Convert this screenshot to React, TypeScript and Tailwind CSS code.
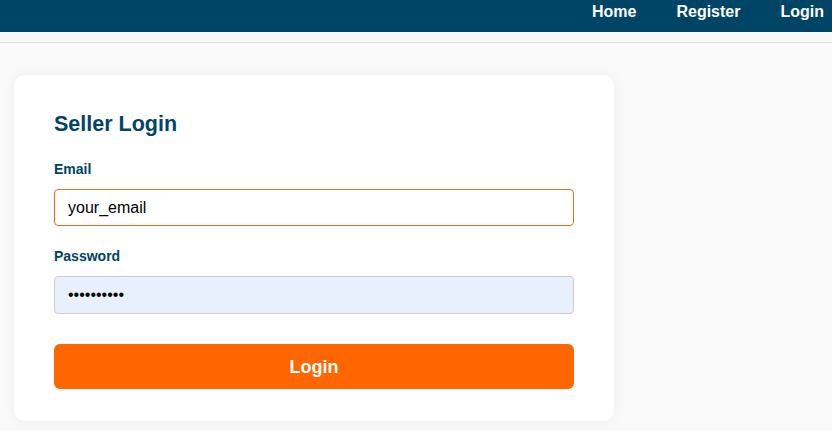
import React from "react";

export default function App() {
  return (
    <div
      className="min-h-screen w-full bg-[#f9f9f9]"
      style={{ fontFamily: '"Liberation Sans", Arial, sans-serif' }}
    >
      <header className="h-8 bg-[#004466] flex justify-end items-start pr-2">
        <nav className="flex gap-10 text-white font-bold text-base leading-6">
          <a href="#" className="text-white">Home</a>
          <a href="#" className="text-white">Register</a>
          <a href="#" className="text-white">Login</a>
        </nav>
      </header>
      <div className="h-[11px] border-b border-[#dddddd]" />
      <main className="pt-8 pl-[14px]">
        <div className="w-[600px] bg-white rounded-[10px] shadow-[0_0_12px_rgba(0,0,0,0.05)] px-10 pt-9 pb-8">
          <h2 className="text-[21.5px] leading-[27px] font-bold text-[#004466] mb-[21px]">Seller Login</h2>
          <label className="block text-sm leading-5 font-bold text-[#004466] mb-[10px]">Email</label>
          <input
            type="text"
            readOnly
            defaultValue="your_email"
            className="block w-full h-[37px] px-[13px] text-base text-black bg-white border border-[#f26a1b] rounded outline-none mb-5"
            style={{ fontFamily: '"Liberation Sans", Arial, sans-serif' }}
          />
          <label className="block text-sm leading-5 font-bold text-[#004466] mb-[10px]">Password</label>
          <input
            type="password"
            readOnly
            defaultValue="1234567890"
            className="block w-full h-[38px] px-[13px] text-base text-black bg-[#e8f0fe] border border-[#cccccc] rounded outline-none mb-[30px]"
            style={{ fontFamily: '"Liberation Sans", Arial, sans-serif' }}
          />
          <button className="block w-full h-[45px] bg-[#ff6600] text-white font-bold text-lg rounded-md">
            Login
          </button>
        </div>
      </main>
    </div>
  );
}
